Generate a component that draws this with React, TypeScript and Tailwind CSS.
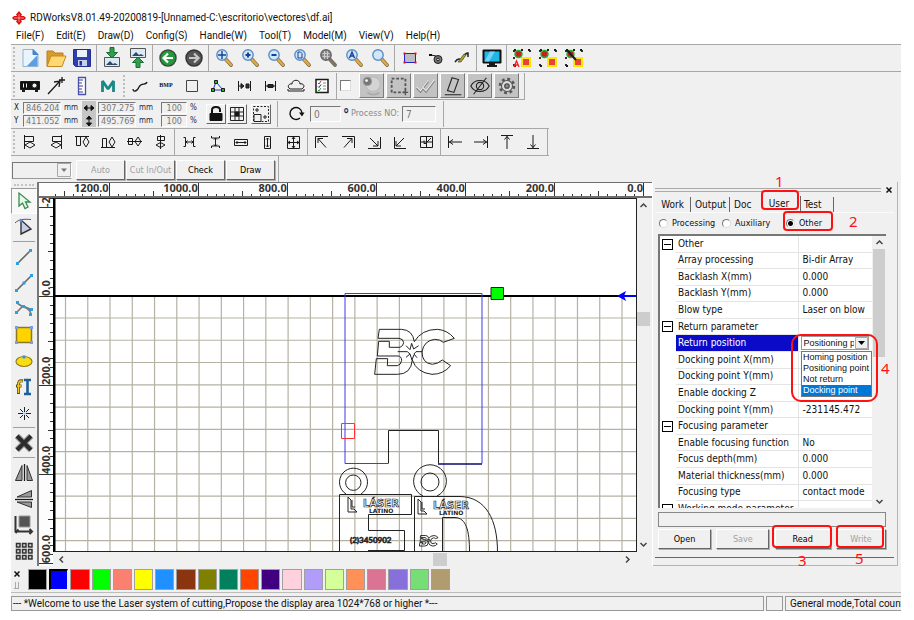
import React from "react";

const UI = "font-['Roboto','Noto_Sans',sans-serif]";
const PANEL = "font-['DejaVu_Sans_Condensed','DejaVu_Sans',sans-serif]";

type Kids = { children?: React.ReactNode };

function Tool({ label, children }: Kids & { label: string }) {
  return (
    <button type="button" aria-label={label} className="flex h-[26px] w-[26px] shrink-0 items-center justify-center">
      <svg width="24" height="24" viewBox="0 0 24 24" fill="none" stroke="#1a1a1a" strokeWidth="1">
        {children}
      </svg>
    </button>
  );
}

function RaisedTool({ label, children }: Kids & { label: string }) {
  return (
    <button
      type="button"
      aria-label={label}
      className="flex h-[25px] w-[25px] shrink-0 items-center justify-center border border-t-white border-l-white border-r-[#7a7a7a] border-b-[#7a7a7a] bg-[#c3c3c3]"
    >
      <svg width="22" height="22" viewBox="0 0 24 24" fill="none" stroke="#222" strokeWidth="1.2">
        {children}
      </svg>
    </button>
  );
}

function Grip() {
  return <div className="mx-[2px] h-[22px] w-[2px] shrink-0 border-l-2 border-dotted border-[#bdbdbd]" />;
}

function Sep4() {
  return <div className="mr-[2px] ml-px h-[26px] w-px shrink-0 bg-[#a8a8a8]" />;
}

function Sep3() {
  return <div className="mx-px h-[26px] w-px shrink-0 bg-[#a8a8a8]" />;
}

function HSep() {
  return <div className="mt-px mb-[2px] ml-[2px] h-px w-[22px] shrink-0 bg-[#a0a0a0]" />;
}

function Lens({ fill = "#cfe6fb", ring = "#5b8fc4", handle = "#e8a838", children }: Kids & { fill?: string; ring?: string; handle?: string }) {
  return (
    <>
      <path d="M14 13.5 19 19" stroke="#7a6a4a" strokeWidth="3.8" strokeLinecap="round" />
      <path d="M14.2 13.8 19 18.8" stroke={handle} strokeWidth="2.4" strokeLinecap="round" />
      <circle cx="10" cy="9" r="5.2" fill={fill} stroke={ring} strokeWidth="1.4" />
      <g stroke="#1c3f94" strokeWidth="1.4">{children}</g>
    </>
  );
}

function ToolbarMain() {
  return (
    <div role="toolbar" aria-label="Standard" className="flex h-7 items-center border-t border-b border-[#a8a8a8]">
      <Grip />
      <Tool label="New">
        <path d="M5 3.5h10l5 5v12H5z" fill="#eaf4fd" stroke="#8fb4d8" />
        <path d="M9 20 19.5 9v11z" fill="#5b9fe0" stroke="none" />
        <path d="M15 3.5v5h5z" fill="#3f86cf" stroke="#3f86cf" />
      </Tool>
      <Tool label="Open">
        <path d="M3 20V5h6l2 2h8v4" fill="#d99a2b" stroke="#b97f1d" />
        <path d="M3 20.5 7 10h15l-4 10.5z" fill="#ffd873" stroke="#c08a22" />
      </Tool>
      <Tool label="Save">
        <path d="M3.5 3.5h17v17h-15l-2-2z" fill="#2e3fae" stroke="#23308c" />
        <path d="M7 4h10v7H7z" fill="#eef1fa" stroke="none" />
        <path d="M8 14h9v6H8z" fill="#c9cfe6" stroke="none" />
        <path d="M9.5 15h2.5v4.5H9.5z" fill="#26318a" stroke="none" />
      </Tool>
      <Sep4 />
      <Tool label="Import">
        <path d="M4.5 11.5h15v9h-15z" fill="#dceaf5" stroke="#555" />
        <path d="m6 19 4-4 3 3 2-1 3 2z" fill="#2a4a6a" stroke="none" />
        <path d="M10 1.500h4v5h3.500L12 12 6.500 6.500H10z" fill="#2fa04b" stroke="#1b6e30" />
      </Tool>
      <Tool label="Export">
        <path d="M4.5 2.5h15v9h-15z" fill="#dceaf5" stroke="#555" />
        <path d="m6 10 4-4 3 3 2-1 3 2z" fill="#2a4a6a" stroke="none" />
        <path d="M10 21.500h4v-5h3.500L12 11l-5.500 5.500H10z" fill="#2fa04b" stroke="#1b6e30" />
      </Tool>
      <Sep4 />
      <Tool label="Undo">
        <circle cx="12" cy="12" r="8" fill="#22993a" stroke="#3c4a3c" strokeWidth="1.5" />
        <path d="M17 12H8m4-4.5L7.5 12l4.5 4.5" stroke="#fff" strokeWidth="2.2" />
      </Tool>
      <Tool label="Redo">
        <circle cx="12" cy="12" r="8" fill="#555" stroke="#333" strokeWidth="1.5" />
        <path d="M7 12h9m-4-4.5 4.5 4.5-4.5 4.5" stroke="#c8c8c8" strokeWidth="2.2" />
      </Tool>
      <Sep4 />
      <Tool label="Pan">
        <Lens>
          <path d="M10 5v8M6 9h8" />
        </Lens>
      </Tool>
      <Tool label="Zoom in">
        <Lens>
          <path d="M10 6.5v5M7.500 9h5" strokeWidth="2" />
        </Lens>
      </Tool>
      <Tool label="Zoom out">
        <Lens>
          <path d="M7.500 9h5" strokeWidth="2" />
        </Lens>
      </Tool>
      <Tool label="Zoom to page">
        <Lens>
          <path d="M8 6h2.500L12 7.500V12H8z" strokeWidth="1" />
        </Lens>
      </Tool>
      <Tool label="Zoom to table">
        <Lens fill="#8a8a8a" ring="#666" handle="#777">
          <path d="M6.500 7.500h7M6.500 10.500h7M8.500 5v8M11.500 5v8" stroke="#ccc" strokeWidth="1" />
        </Lens>
      </Tool>
      <Tool label="Zoom all">
        <Lens>
          <path d="m7.500 12 2.500-6 2.500 6M8.500 10h3" />
        </Lens>
      </Tool>
      <Tool label="Zoom selection">
        <Lens />
      </Tool>
      <Sep4 />
      <Tool label="Node box">
        <path d="M6.500 7.500h11v9h-11z" fill="#bdbdbd" stroke="#2222dd" />
        <path d="M5.500 6.500h2v2h-2zM16.500 6.500h2v2h-2zM5.500 15.500h2v2h-2zM16.500 15.500h2v2h-2z" fill="#e11" stroke="none" />
      </Tool>
      <Tool label="Origin">
        <circle cx="14" cy="13.500" r="4" fill="#777" />
        <circle cx="14" cy="13.500" r="1.3" fill="#eee" />
        <path d="m7 9 5 1" />
        <path d="M5 8h3v2H5z" fill="#111" stroke="none" />
      </Tool>
      <Tool label="Path order">
        <path d="M5 16c4-6 5-1 7-3s2-6 6-6v4" stroke="#222" strokeWidth="1.500" />
        <path d="m8 16 6-8 2 1-5 7z" fill="#b6a81e" stroke="#443" strokeWidth=".7" />
      </Tool>
      <Sep4 />
      <Tool label="Preview">
        <path d="M3 4h18v13H3z" fill="#111" stroke="#111" />
        <path d="M4.5 5.5h15v10h-15z" fill="#1fb6e8" stroke="none" />
        <path d="M10 5.5h5l-6 10H4.500z" fill="#6fd4f5" stroke="none" />
        <path d="M10 17h4v3H10zM7 20h10" fill="#111" strokeWidth="2" />
      </Tool>
      <Sep4 />
      {["Select all", "Select group", "Select path"].map((name, i) => (
        <Tool key={name} label={name}>
          <path d="M4 4h16M4 20h16M4 4v16M20 4v16" strokeDasharray="2 5" strokeWidth="1.8" />
          <path d="M12 12h8v8h-8z" fill="#e8423a" stroke="#ffe800" strokeWidth="2" />
          <circle cx="8.500" cy="8" r="3.500" fill="#c42020" stroke="#25b030" strokeWidth="1.500" />
          {i === 0 && <path d="m4 21 2.500-6L9 21M5 19h3" stroke="#e22" strokeWidth="1.300" />}
          {i === 2 && <path d="m5 4 9 10" strokeWidth="2" />}
        </Tool>
      ))}
    </div>
  );
}

function ToolbarSecond() {
  return (
    <div role="toolbar" aria-label="System" className="flex h-7 items-center self-start border-b border-[#a8a8a8]">
      <Grip />
      <Tool label="Device">
        <path d="M2.500 7.500h19v8h-19z" fill="#111" />
        <circle cx="16.500" cy="11.500" r="2.500" fill="#eee" />
        <path d="M5.500 9.500v4M8.500 9.500v4" stroke="#eee" />
        <path d="M4 17h3M17 17h3" strokeWidth="2" />
      </Tool>
      <Tool label="Set origin">
        <path d="M4 20 16 7M10 8l6-1-1 6M18 3v6M15 6h6" strokeWidth="1.300" />
      </Tool>
      <Tool label="Measure">
        <path d="M8.500 3.500h7v17h-7z" fill="#fff" stroke="#4a50a8" strokeWidth="1.300" />
        <path d="M9 6h4M9 9h3M9 12h4M9 15h3M9 18h4" stroke="#333a99" />
      </Tool>
      <Tool label="Material library">
        <path d="M6.500 18V7l5.500 8 5.500-8v11" stroke="#178a86" strokeWidth="2.800" strokeLinejoin="bevel" />
      </Tool>
      <Grip />
      <Tool label="Curve">
        <path d="M5 15c0 3 4 3 6-2s7-1 8-5" strokeWidth="1.300" />
      </Tool>
      <button type="button" className="h-[26px] w-[26px] shrink-0 text-center font-['Liberation_Serif',serif] text-[6px] font-bold">
        BMP
      </button>
      <Tool label="Frame">
        <path d="M6.500 6.500h11v11h-11z" stroke="#444" />
      </Tool>
      <Tool label="Nodes">
        <path d="m10 8 7 8M7 16h9M10 8l-3 8" stroke="#2233cc" />
        <path d="M8.500 6.500h3v3h-3zM5.500 14.500h3v3h-3zM15.500 14.500h3v3h-3z" fill="#19c019" />
      </Tool>
      <Tool label="Offset in">
        <path d="M6.500 7v10M18.500 7v10M7 12h4" />
        <path d="m9 9.500 3 2.500-3 2.500zM14 10h3v4h-3z" fill="#333" />
      </Tool>
      <Tool label="Offset edge">
        <path d="M7.500 7v10M17.500 7v10M10 10.500h5v3h-5zM8 12h9" />
        <path d="M10 11h5v2h-5z" fill="#333" />
      </Tool>
      <Tool label="Dock">
        <path d="M6 15c-4-3 0-6 2-5 0-5 8-5 8 0 3-1 6 2 2 5zM4 15v2h16v-2" />
      </Tool>
      <Tool label="Task list">
        <path d="M6 5.500h12v13H6z" fill="#fff" strokeWidth="1.500" />
        <path d="m8 9 1 1 2-3" stroke="#d22" />
        <path d="m8 12.500 1 1 2-3" stroke="#22c" />
        <path d="m8 16 1 1 2-3" stroke="#2a2" />
        <path d="M13 9h3M13 12h3M13 15h3" stroke="#888" />
      </Tool>
      <Sep3 />
      <input type="checkbox" aria-label="Enable selection" className="mr-[8px] ml-[2px] h-[11px] w-[11px] shrink-0 appearance-none border border-t-[#777] border-l-[#777] border-r-[#ddd] border-b-[#ddd] bg-white" />
      <div className="flex gap-[2px]">
        <RaisedTool label="Sphere">
          <circle cx="13" cy="10" r="8" fill="#d4d4d4" stroke="#bbb" />
          <circle cx="7" cy="7" r="4.500" fill="#777" stroke="#999" />
          <circle cx="6" cy="6" r="1.500" fill="#fff" stroke="none" />
          <path d="M7 19c4 3 9 3 13 0" stroke="#aaa" strokeWidth="2" />
        </RaisedTool>
        <RaisedTool label="Marquee">
          <path d="M4 4h15v15H4z" stroke="#555" strokeWidth="2" strokeDasharray="3 2" />
          <path d="M19 16v6M16 19h6" stroke="#555" strokeWidth="1.500" />
        </RaisedTool>
        <RaisedTool label="Apply">
          <path d="m2 14 4 4L14 7M9 15l3 3L21 6" stroke="#888" strokeWidth="2.600" />
          <path d="m2 13 4 4L14 6M9 14l3 3L21 5" stroke="#eee" strokeWidth="1.200" />
        </RaisedTool>
        <RaisedTool label="Skew">
          <path d="m11 3 7 2-5 14-7-2zM3 21.500h18" />
        </RaisedTool>
        <RaisedTool label="Visibility">
          <path d="M2 12c4-8 16-8 20 0-4 8-16 8-20 0zM5 21 19 3" />
          <circle cx="12" cy="12" r="4" />
        </RaisedTool>
        <RaisedTool label="Settings">
          <circle cx="12" cy="12" r="7.500" stroke="#555" strokeWidth="3" strokeDasharray="3 2.900" />
          <circle cx="12" cy="12" r="6" fill="#ddd" stroke="#555" />
          <circle cx="12" cy="12" r="2.500" fill="#888" stroke="#444" />
        </RaisedTool>
      </div>
      <div className="ml-[5px] h-[26px] w-px bg-[#a8a8a8]" />
    </div>
  );
}

const field =
  "border border-t-[#777] border-l-[#777] border-r-white border-b-white bg-[#f0f0f0] p-0 leading-[10px] text-[#777]";

function SizeField({ label, value, width, unit }: { label: string; value: string; width: string; unit: string }) {
  return (
    <div className="flex h-[13px] items-center">
      <input aria-label={label} defaultValue={value} className={`${field} h-[12px] pl-[2px] text-[9px] ${width} ${PANEL}`} />
      <span className="ml-[3px] w-[18px] text-[8px] text-[#1d2b4a]">{unit}</span>
    </div>
  );
}

function ToolbarCoords() {
  const small =
    "flex h-[20px] w-[20px] shrink-0 items-center justify-center border border-t-white border-l-white border-r-[#666] border-b-[#666] bg-[#f0f0f0]";
  return (
    <div role="toolbar" aria-label="Position and size" className={`flex h-7 items-center self-start ${PANEL}`}>
      <div className="flex w-[12px] flex-col pl-[3px] text-[8px]">
        <span className="h-[13px] leading-[13px]">X</span>
        <span className="h-[13px] leading-[13px]">Y</span>
      </div>
      <div className="flex w-[59px] flex-col">
        <SizeField label="X" value="846.204" width="w-[38px]" unit="mm" />
        <SizeField label="Y" value="411.052" width="w-[38px]" unit="mm" />
      </div>
      <button type="button" aria-label="Resize mode" className="h-[26px] w-[14px] bg-[#c6c6c6]">
        <svg width="14" height="26" viewBox="0 0 14 26" fill="#111" stroke="#111">
          <path d="M3 7h8M5 4.500 2 7l3 2.500zM9 4.500 12 7 9 9.500zM7 17v6M4.500 18 7 15l2.500 3zM4.500 22 7 25l2.500-3z" />
        </svg>
      </button>
      <div className="ml-[2px] flex w-[63px] flex-col">
        <SizeField label="Width" value="307.275" width="w-[38px]" unit="mm" />
        <SizeField label="Height" value="495.769" width="w-[38px]" unit="mm" />
      </div>
      <div className="flex w-[45px] flex-col">
        <SizeField label="Width percent" value=" 100" width="w-[26px]" unit="%" />
        <SizeField label="Height percent" value=" 100" width="w-[26px]" unit="%" />
      </div>
      <button type="button" aria-label="Lock ratio" className={small}>
        <svg width="16" height="18" viewBox="0 0 16 18" fill="none" stroke="#111">
          <path d="M4 8V5c0-4 8-4 8 0v2" strokeWidth="2" />
          <path d="M2 8.500h12v7H2z" fill="#111" />
        </svg>
      </button>
      <button type="button" aria-label="Anchor point" className={`${small} ml-px`}>
        <svg width="16" height="16" viewBox="0 0 16 16" fill="none" stroke="#222">
          <path d="M1.500 1.500h13v13h-13zM6 1.500v13M10 1.500v13M1.500 6h13M1.500 10h13" />
          <path d="M6 6h4v4H6z" fill="#111" />
        </svg>
      </button>
      <button type="button" aria-label="Copy offset" className={`${small} ml-[4px]`}>
        <svg width="18" height="18" viewBox="0 0 18 18" fill="none" stroke="#222">
          <path d="M1.500 1.500h15v15h-15z" strokeDasharray="2 1.500" />
          <path d="M2 9.500h7v7H2zM5 3v4M3 5h4M13 10v4M11 12h4" />
        </svg>
      </button>
      <div className="ml-[6px] h-[26px] w-px bg-[#a8a8a8]" />
      <button type="button" aria-label="Rotate" className="ml-[8px] flex w-[20px] justify-center">
        <svg width="18" height="18" viewBox="0 0 18 18" fill="none" stroke="#111" strokeWidth="1.400">
          <path d="M13 13a6 6 0 1 1 2-5" />
          <path d="m12 7.500 5.500 0-2.500 4z" fill="#111" stroke="none" />
        </svg>
      </button>
      <input aria-label="Angle" defaultValue="0" className={`${field} ml-[4px] h-[16px] w-[31px] pl-[3px] text-[10px] ${PANEL}`} />
      <span className="ml-[2px] w-[8px] text-[14px] font-bold text-[#1d2b5a]">°</span>
      <label htmlFor="process-no" className="w-[51px] text-[9px] whitespace-nowrap text-[#8a8a8a]">
        Process NO:
      </label>
      <input id="process-no" defaultValue="7" className={`${field} h-[16px] w-[34px] pl-[3px] text-[10px] ${PANEL}`} />
      <div className="ml-[7px] h-[26px] w-px bg-[#a8a8a8]" />
    </div>
  );
}

const alignGroups: { name: string; d: string }[][] = [
  [
    { name: "Align left", d: "M6.500 5v14M6.500 6.500h9v5h-9M7 15l5-3 5 3-5 3z" },
    { name: "Align right", d: "M17.500 5v14M17.500 6.500h-9v5h9M17 15l-5-3-5 3 5 3z" },
    { name: "Align top", d: "M5 6.500h14M6.500 6.500v9h4v-9M16 7l-3 5 3 5 3-5z" },
    { name: "Align bottom", d: "M5 17.500h14M6.500 17.500v-9h4v9M16 17l-3-5 3-5 3 5z" },
    { name: "Align middle", d: "M5 11.500h15M6.500 8.500h4v6h-4zM16 7l-3 4.500 3 4.500 3-4.500z" },
    { name: "Align center", d: "M12.500 5v14M9.500 6.500h7v4h-7zM8 15l4.500-2.500L17 15l-4.500 2.500z" },
  ],
  [
    { name: "Space across", d: "M6.500 7.500h2v9h-2M18.500 7.500h-2v9h2M9 12h7M10.500 10.500 9 12l1.500 1.500M14.500 10.500 16 12l-1.500 1.500" },
    { name: "Space down", d: "M8.500 6v2h8V6M8.500 18v-2h8v2M12.500 8v8M11 9.500 12.500 8 14 9.500M11 14.500l1.500 1.500 1.500-1.500" },
    { name: "Same width", d: "M5.500 9.500h13v6h-13zM7 12.500h10M8.500 11 7 12.500 8.500 14M15.500 11l1.500 1.500-1.500 1.500" },
    { name: "Same height", d: "M9.500 6.500h6v12h-6zM12.500 8v9M11 9.500 12.500 8 14 9.500M11 15.500l1.500 1.500 1.500-1.500" },
    { name: "Same size", d: "M6.500 6.500h12v12h-12zM12.500 6v13M6 12.500h13M9 11l-2 1.500L9 14M16 11l2 1.500-2 1.500M11 9l1.500-2L14 9M11 16l1.500 2 1.500-2" },
  ],
  [
    { name: "Top left", d: "M5.500 18V6.500H18M8 8.500l8 9M8 13V8.500h5" },
    { name: "Top right", d: "M18.500 18V6.500H6M16 8.500l-8 9M16 13V8.500h-5" },
    { name: "Bottom right", d: "M18.500 7v11.500H6M8 8l8 8M16 11v5h-5" },
    { name: "Bottom left", d: "M6.500 7v11.500H18M16 8l-8 8M8 11v5h5" },
    { name: "Page center", d: "M6.500 6.500h12v11h-12zM12.500 6.500v11M6.500 12h12M17 8l-4 4M10 10.500v3h3" },
  ],
  [
    { name: "To left", d: "M5.500 6v12M6 12h13M10 9.500 6.500 12l3.500 2.500" },
    { name: "To right", d: "M18.500 6v12M18 12H5M14 9.500l3.500 2.500-3.500 2.500" },
    { name: "To top", d: "M6 5.500h12M12 6v13M9.500 9.500 12 6.500l2.500 3" },
    { name: "To bottom", d: "M6 18.500h12M12 18V5M9.500 14.500l2.500 3 2.500-3" },
  ],
];

function ToolbarAlign() {
  return (
    <div role="toolbar" aria-label="Align" className="flex h-7 items-center self-start border-t border-b border-[#a8a8a8]">
      <Grip />
      {alignGroups.map((group, i) => (
        <React.Fragment key={i}>
          {group.map((icon) => (
            <Tool key={icon.name} label={icon.name}>
              <path d={icon.d} />
            </Tool>
          ))}
          <Sep3 />
        </React.Fragment>
      ))}
    </div>
  );
}

function Push({ children, muted, width }: Kids & { muted?: boolean; width: string }) {
  return (
    <button
      type="button"
      className={`h-[20px] ${width} shrink-0 border border-t-white border-l-white border-r-[#666] border-b-[#666] bg-[#f0f0f0] text-center text-[9px] leading-[18px] whitespace-nowrap shadow-[1px_1px_0_#b0b0b0] ${muted ? "text-[#a0a0a0]" : "text-black"} ${PANEL}`}
    >
      {children}
    </button>
  );
}

function ToolbarCut() {
  return (
    <div className="flex h-[26px] items-center self-start border-r border-[#a8a8a8] pt-[2px] pl-px">
      <div className="relative h-[17px] w-[60px]">
        <select aria-label="Cut node" className="h-full w-full appearance-none border border-t-[#777] border-l-[#777] border-r-white border-b-[#999] bg-[#f0f0f0]">
          <option> </option>
        </select>
        <svg className="pointer-events-none absolute top-px right-px" width="14" height="14" viewBox="0 0 14 14">
          <path d="M.5.5h13v13H.5z" fill="#f0f0f0" stroke="#a8a8a8" />
          <path d="M4 5.500h6L7 9z" fill="#777" />
        </svg>
      </div>
      <div className="ml-[4px] flex gap-px pr-[3px]">
        <Push width="w-[49px]" muted>Auto</Push>
        <Push width="w-[49px]" muted>Cut In/Out</Push>
        <Push width="w-[49px]">Check</Push>
        <Push width="w-[49px]">Draw</Push>
      </div>
    </div>
  );
}

function ToolBox() {
  return (
    <div role="toolbar" aria-label="Drawing tools" className="flex w-[26px] shrink-0 flex-col">
      <div className="mx-[3px] mt-[2px] mb-[2px] h-[2px] border-t-2 border-dotted border-[#c4c4c4]" />
      <div className="border border-t-[#999] border-l-[#999] border-r-white border-b-white bg-[#f8f8f8]">
        <div className="-m-px">
          <Tool label="Pick">
            <path d="M7 4v13l3.500-3 2.500 5.500 3-1.500-2.500-5H18z" fill="#e4fce8" stroke="#3d8a4d" strokeWidth="1.300" />
          </Tool>
        </div>
      </div>
      <Tool label="Edit nodes">
        <path d="M9 5v14l10-5z" fill="#c8cce6" stroke="#333" strokeWidth="1.400" />
        <path d="M3 8c4-4 9-4 16-3.500" stroke="#555" />
        <circle cx="9" cy="5.500" r="1.500" fill="#5b8ff5" stroke="none" />
      </Tool>
      <HSep />
      <Tool label="Line">
        <path d="M6 18 18 6" stroke="#666" strokeWidth="1.600" />
        <path d="M4 17h3v3H4zM17 4h3v3h-3z" fill="#2f9fe0" stroke="none" />
      </Tool>
      <Tool label="Polyline">
        <path d="M5 19 19 5" stroke="#666" strokeWidth="1.600" />
        <path d="M3 18h3v3H3zM18 3h3v3h-3zM10.500 10.500h3v3h-3z" fill="#2f9fe0" stroke="none" />
      </Tool>
      <Tool label="Spline">
        <path d="m5 6 6 4c5 1 7 3 8 7M4 16l7-7 9 4" stroke="#777" strokeWidth="1.600" />
        <path d="M4 4h3v3H4zM3 14h3v3H3zM10 8h3v3h-3zM18 11h3v3h-3zM17 16h3v3h-3z" fill="#2f9fe0" stroke="none" />
      </Tool>
      <Tool label="Rectangle">
        <path d="M4.500 4.500h15v15h-15z" fill="#ffd400" stroke="#8a7a28" strokeWidth="1.500" />
        <path d="M3 3h3v3H3zM18 3h3v3h-3zM3 18h3v3H3zM18 18h3v3h-3z" fill="#7a9af0" stroke="none" />
      </Tool>
      <Tool label="Ellipse">
        <ellipse cx="12" cy="12.500" rx="8" ry="5" fill="#f7dc10" stroke="#95801c" strokeWidth="1.200" />
        <path d="M10.500 6.500h3v3h-3z" fill="#3b8fe8" stroke="none" />
      </Tool>
      <Tool label="Text">
        <path d="M11 6c-4-1-4.500 1-4.500 4v9M4 11h5.500" stroke="#5d4d10" strokeWidth="3" />
        <path d="M10.500 6.200c-3.500-1-4 1-4 3.800v8M5 11h4" stroke="#f2c71d" strokeWidth="1.500" />
        <path d="M12 5h7M12 19h7M15.500 5v14" stroke="#1b5f96" strokeWidth="2.600" />
      </Tool>
      <Tool label="Point">
        <path d="M12.500 6v5M12.500 14v5M6 12.500h5M14 12.500h5M8 8l3 3M17 8l-3 3M8 17l3-3M17 17l-3-3" stroke="#222" />
        <path d="M11.500 11.500h2v2h-2z" fill="#8fc0ff" stroke="none" />
      </Tool>
      <HSep />
      <Tool label="Delete">
        <path d="m5 5 14 14M19 5 5 19" stroke="#aaa" strokeWidth="6.500" />
        <path d="m5 5 14 14M19 5 5 19" stroke="#2c2c2c" strokeWidth="4.200" />
      </Tool>
      <HSep />
      <Tool label="Mirror horizontal">
        <path d="M10 4.500V19.500H3.500zM15 4.500V19.500h5.500z" fill="#999" stroke="#333" />
        <path d="M12.500 3v17" strokeWidth="1.300" />
      </Tool>
      <Tool label="Mirror vertical">
        <path d="M19.500 3.500v6.500H5zM19.500 20.500V15H5z" fill="#999" stroke="#333" />
        <path d="M3 12.500h18" strokeWidth="1.300" />
      </Tool>
      <Tool label="Dock origin">
        <path d="M7 3h11v11H7z" fill="#555" stroke="#999" />
        <path d="M3.500 3v15.500H20M3.500 20l3-3.500M17.500 16l2.500 2.500-2.500 2.500" stroke="#333" strokeWidth="2" />
      </Tool>
      <Tool label="Array">
        <path d="M4.500 4.500h3.500v3.500h-3.500zM10.500 4.500h3.500v3.500h-3.500zM16.500 4.500h3.500v3.500h-3.500zM4.500 10.500h3.500v3.500h-3.500zM10.500 10.500h3.500v3.500h-3.500zM16.500 10.500h3.500v3.500h-3.500zM4.500 16.500h3.500v3.500h-3.500zM10.500 16.500h3.500v3.500h-3.500zM16.500 16.500h3.500v3.500h-3.500z" fill="#d8d8d8" stroke="#333" strokeWidth="1.500" />
      </Tool>
    </div>
  );
}

const UNIT = 8.906;
const ORIGIN_X = 643;
const ORIGIN_Y = 296;
const rulerFont = "font-['Noto_Sans','Open_Sans',sans-serif] text-[11px] font-bold";

function TopRuler() {
  const ticks = Array.from({ length: 67 }, (_, i) => i);
  return (
    <svg className="block h-[16px] w-full overflow-visible border-t border-b-2 border-[#6e6e6e] bg-[#fdfdfd]">
      <g transform="translate(-53 0)">
        {ticks.map((i) => {
          const x = Math.round(ORIGIN_X - i * UNIT) + 0.5;
          const top = i % 10 === 0 ? 0 : i % 5 === 0 ? 8 : 11;
          return <path key={i} d={`M${x} ${top}V13`} stroke="#333" />;
        })}
        {[0, 200, 400, 600, 800, 1000, 1200].map((v) => (
          <text key={v} x={ORIGIN_X - (v / 20) * UNIT} y="9" textAnchor="end" fill="#333" className={rulerFont}>
            {v.toFixed(1)}
          </text>
        ))}
      </g>
    </svg>
  );
}

function SideRuler() {
  const ticks = Array.from({ length: 43 }, (_, i) => i - 11);
  return (
    <svg className="block h-[368px] w-[15px] bg-[#fdfdfd]">
      <g transform="translate(0 -198)">
        {ticks.map((i) => {
          const y = Math.round(ORIGIN_Y + i * UNIT) + 0.5;
          const left = i % 10 === 0 ? 0 : i % 5 === 0 ? 9 : 11;
          return <path key={i} d={`M${left} ${y}H14`} stroke="#333" />;
        })}
        {[-200, 0, 200, 400, 600].map((v) => (
          <text key={v} transform={`translate(11 ${ORIGIN_Y + (v / 20) * UNIT}) rotate(-90)`} fill="#333" className={rulerFont}>
            {v.toFixed(1)}
          </text>
        ))}
      </g>
    </svg>
  );
}

function Monogram() {
  return (
    <>
      <path d="M238 148H305Q338 150 343 185Q365 148 412 148Q442 150 463 175L430 187Q420 178 404 178Q372 182 366 215Q366 250 397 253Q413 252 427 240L452 257Q430 283 396 283Q350 278 337 240Q333 283 292 283H224L229 236H263L262 257H292Q303 255 305 241Q304 228 294 228H232L236 184H268V202H300Q310 198 311 188Q310 176 297 175H234Z" />
      <path d="M293 215H322L330 222L318 232M318 197L330 209L335 190L341 207L356 197M368 215H348L342 222L351 233M330 222L336 240L342 224" />
    </>
  );
}

function Brand({ x, y }: { x: number; y: number }) {
  return (
    <g transform={`translate(${x} ${y})`}>
      <path d="M0 0V15H9L6 12H3V3ZM4 3V10H7" strokeWidth="1" />
      <text x="15" y="10" strokeWidth="0.7" className="font-['DejaVu_Sans',sans-serif] text-[10px] font-bold">
        LÁSER
      </text>
      <text x="21" y="16" fill="#222" stroke="none" className="font-['DejaVu_Sans',sans-serif] text-[6px] font-bold">
        LATINO
      </text>
    </g>
  );
}

function Canvas() {
  const columns = Array.from({ length: 32 }, (_, i) => 65.5 + i * 22.26);
  const rows = Array.from({ length: 11 }, (_, i) => 318 + i * 22.26);
  return (
    <svg role="img" aria-label="Work area" className="block h-[354px] w-full bg-white">
      <g transform="translate(-53 -198)" fill="none" stroke="#222">
        <g stroke="#b5b2a3" strokeWidth="1.200">
          {columns.map((x) => (
            <path key={x} d={`M${x} 297V552`} />
          ))}
          {rows.map((y) => (
            <path key={y} d={`M54 ${y}H700`} />
          ))}
        </g>
        <path d="M54 296H700" stroke="#000" strokeWidth="2" />
        <path d="M388.500 463.500V430.500H438.500V463.500" />
        <path d="M482 463.500V293.500H345V463.500H388" stroke="#3b3be8" />
        <path d="M438 464H482" stroke="#0a0a70" strokeWidth="1.500" />
        <path d="M341.500 423.500h13v15h-13z" stroke="#f33" />
        <path d="M491 287.500h12.500V299.500H491z" fill="#0f0" />
        <path d="M636 296H622" stroke="#00f" strokeWidth="2" />
        <path d="m617 296 9-5-2 5 2 5z" fill="#00f" stroke="none" />
        <g transform="translate(300 280) scale(.3333)" strokeWidth="3">
          <Monogram />
        </g>
        <path d="M346 494A14 14 0 1 1 361 494" />
        <circle cx="353.300" cy="482.700" r="7.700" />
        <path d="M423 496A16.400 16.400 0 1 1 437 496" />
        <circle cx="430" cy="482" r="9" />
        <path d="M339.500 552V494.500H411.500V514.500H368.500V530.500H404.500V550.500H368" />
        <path d="M414.500 552V496.500H460C486 497 497.500 520 497.500 552" />
        <path d="M442.500 552V517.500H455C466 518 469.500 530 469.500 552" />
        <Brand x={348} y={497} />
        <Brand x={418} y={499} />
        <text x="350" y="543" fill="#111" strokeWidth=".5" className="font-['Lato',sans-serif] text-[8px] font-bold">
          (2)3450902
        </text>
        <g transform="translate(402 524) scale(.078)" strokeWidth="12">
          <Monogram />
        </g>
        <path d="M54 198V552" stroke="#000" strokeWidth="3" />
        <path d="M54 198.500H700M54 551.500H700" stroke="#222" />
      </g>
    </svg>
  );
}

function Chevron({ d }: { d: string }) {
  return (
    <svg width="13" height="13" viewBox="0 0 13 13" fill="none" stroke="#444" strokeWidth="1.500" className="shrink-0">
      <path d={d} />
    </svg>
  );
}

const UP = "m3.500 8 3-3 3 3";
const DOWN = "m3.500 5 3 3 3-3";
const LEFT = "m8 3.500-3 3 3 3";
const RIGHT = "m5 3.500 3 3-3 3";

function Workspace() {
  return (
    <div className="flex min-w-0 flex-1 flex-col border-l-2 border-[#777]">
      <div className="flex">
        <div className="h-[16px] w-[14px] shrink-0 border-t border-b-2 border-[#6e6e6e] bg-[#fdfdfd]" />
        <div className="min-w-0 flex-1">
          <TopRuler />
        </div>
      </div>
      <div className="flex">
        <div className="w-[14px] shrink-0 overflow-hidden">
          <SideRuler />
        </div>
        <div className="min-w-0 flex-1">
          <Canvas />
          <div className="flex h-[14px] items-center justify-between px-[2px]">
            <Chevron d={LEFT} />
            <div className="flex min-w-0 flex-1 justify-end pr-[174px]">
              <div className="h-[13px] w-[14px] bg-[#cdcdcd]" />
            </div>
            <Chevron d={RIGHT} />
          </div>
        </div>
        <div className="flex h-[354px] w-[16px] shrink-0 flex-col items-start justify-between border-l border-[#222] py-px">
          <Chevron d={UP} />
          <div className="flex flex-1 flex-col justify-start pt-[100px]">
            <div className="h-[14px] w-[13px] bg-[#cdcdcd]" />
          </div>
          <Chevron d={DOWN} />
        </div>
      </div>
    </div>
  );
}

type Row = { name: string; value?: string; group?: boolean; picker?: boolean };

const rows: Row[] = [
  { name: "Other", group: true },
  { name: "Array processing", value: "Bi-dir Array" },
  { name: "Backlash X(mm)", value: "0.000" },
  { name: "Backlash Y(mm)", value: "0.000" },
  { name: "Blow type", value: "Laser on blow" },
  { name: "Return parameter", group: true },
  { name: "Return position", picker: true },
  { name: "Docking point X(mm)", value: "" },
  { name: "Docking point Y(mm)", value: "" },
  { name: "Enable docking Z", value: "" },
  { name: "Docking point Y(mm)", value: "-231145.472" },
  { name: "Focusing parameter", group: true },
  { name: "Enable focusing function", value: "No" },
  { name: "Focus depth(mm)", value: "0.000" },
  { name: "Material thickness(mm)", value: "0.000" },
  { name: "Focusing type", value: "contact mode" },
  { name: "Working mode parameter", group: true },
];

const choices = ["Homing position", "Positioning point", "Not return", "Docking point"];

function PropertyTable() {
  return (
    <div className="flex h-[274px] overflow-hidden border-t-2 border-l-2 border-[#777] bg-white">
      <div className="h-[282px] flex-1">
        <table className="h-full w-full table-fixed border-collapse text-[10px] leading-[14px] whitespace-nowrap">
          <colgroup>
            <col className="w-[16px]" />
            <col className="w-[122px]" />
            <col />
          </colgroup>
          <tbody>
            {rows.map((row, i) => (
              <tr key={i}>
                <td className="p-0 pl-[2px] align-middle">
                  {row.group && (
                    <button type="button" aria-label={`Collapse ${row.name}`} className="flex h-[11px] w-[11px] items-center justify-center border border-black">
                      <span className="h-px w-[7px] bg-black" />
                    </button>
                  )}
                </td>
                <th
                  scope="row"
                  className={`border-r border-b border-[#e4e4e4] p-0 pl-[2px] text-left font-normal ${row.picker ? "bg-[#0a0ac8] text-white" : ""}`}
                >
                  {row.name}
                </th>
                <td className="border-b border-[#e4e4e4] p-0 pl-[4px]">
                  {row.picker ? (
                    <div className="relative -ml-[2px] h-[14px] w-[68px]">
                      <select
                        aria-label="Return position"
                        defaultValue="Positioning point"
                        className="h-full w-full appearance-none border border-[#999] bg-white pr-[14px] pl-[2px] font-['Liberation_Sans',sans-serif] text-[9px] leading-[12px]"
                      >
                        {choices.map((c) => (
                          <option key={c}>{c}</option>
                        ))}
                      </select>
                      <svg className="pointer-events-none absolute top-px right-px" width="13" height="12" viewBox="0 0 13 12">
                        <path d="M.5.5h12v11H.5z" fill="#f0f0f0" stroke="#aaa" />
                        <path d="M3 4h7l-3.500 4z" fill="#000" />
                      </svg>
                    </div>
                  ) : (
                    row.value
                  )}
                </td>
              </tr>
            ))}
          </tbody>
        </table>
      </div>
      <div className="flex w-[14px] shrink-0 flex-col items-center justify-between bg-[#f0f0f0]">
        <Chevron d={UP} />
        <div className="flex w-full flex-1 flex-col items-center">
          <div className="h-[108px] w-[12px] bg-[#cdcdcd]" />
        </div>
        <Chevron d={DOWN} />
      </div>
    </div>
  );
}

function Mark({ box, digit, n }: { box: string; digit: string; n: number }) {
  return (
    <>
      <div className={`pointer-events-none absolute border-2 border-[#f11] ${box}`} />
      <span className={`pointer-events-none absolute font-['Noto_Sans',sans-serif] text-[15px] leading-[16px] text-[#f11] ${digit}`}>{n}</span>
    </>
  );
}

function Side() {
  const tab = "h-[15px] border-r border-[#666] leading-[15px]";
  return (
    <aside className={`relative flex w-[249px] shrink-0 flex-col border-l border-white text-[10px] ${PANEL}`}>
      <div className="mr-[3px] flex flex-1 flex-col border-r border-b border-[#b4b4b4] pl-[2px]">
        <div className="mt-[3px] flex h-[9px] items-center">
          <div className="h-[4px] flex-1 border-y border-[#aaa]" />
          <button type="button" aria-label="Close panel" className="mx-[5px] flex items-center">
            <svg width="6" height="6" viewBox="0 0 6 6" stroke="#111" strokeWidth="1.500">
              <path d="m.5.5 5 5M5.500.5l-5 5" />
            </svg>
          </button>
        </div>
        <div role="tablist" className="mt-[3px] mr-[3px] flex h-[16px] items-end border-b border-[#fafafa]">
          <button type="button" role="tab" className={`${tab} w-[36px]`}>Work</button>
          <button type="button" role="tab" className={`${tab} w-[39px] pl-px`}>Output</button>
          <button type="button" role="tab" className="h-[15px] w-[33px] pl-[4px] text-left leading-[15px]">Doc</button>
          <button type="button" role="tab" aria-selected="true" className="h-[16px] w-[38px] border-r border-[#666] pr-[5px] text-center leading-[14px]">User</button>
          <button type="button" role="tab" className={`${tab} w-[33px] pl-[3px] text-left`}>Test</button>
        </div>
        <div className="flex h-[21px] items-center pl-[4px] text-[9px]">
          {[
            { name: "Processing", w: "w-[48px]", gap: "mr-[6px]" },
            { name: "Auxiliary", w: "w-[48px]", gap: "mr-[7px]" },
            { name: "Other", w: "w-[40px]", gap: "" },
          ].map((r) => (
            <label key={r.name} className={`flex shrink-0 items-center whitespace-nowrap ${r.gap}`}>
              <input
                type="radio"
                name="section"
                defaultChecked={r.name === "Other"}
                className="h-[9px] w-[9px] shrink-0 appearance-none rounded-full border border-t-[#777] border-l-[#777] border-r-[#ddd] border-b-[#ddd] bg-white checked:bg-[radial-gradient(#000_0_2px,#fff_3px)]"
              />
              <span className={`${r.w} pl-[4px]`}>{r.name}</span>
            </label>
          ))}
        </div>
        <div className="mr-[11px] ml-[3px]">
          <PropertyTable />
          <div className="mt-[4px] h-[15px] border border-[#888]" />
          <div className="mt-[2px] flex justify-between">
            <Push width="w-[53px]">Open</Push>
            <Push width="w-[53px]" muted>Save</Push>
            <Push width="w-[56px]">Read</Push>
            <Push width="w-[50px]" muted>Write</Push>
          </div>
        </div>
        <div className="mt-[8px] mr-[3px] h-px bg-[#666]" />
      </div>
      <ul role="listbox" aria-label="Return position choices" className="absolute top-[169px] left-[148px] w-[71px] border border-[#777] bg-white font-['Liberation_Sans',sans-serif] text-[9px] leading-[11px] whitespace-nowrap">
        {choices.map((c) => (
          <li key={c} role="option" aria-selected={c === "Docking point"} className="h-[11px] pl-px aria-selected:bg-[#0078d7] aria-selected:text-white">
            {c}
          </li>
        ))}
      </ul>
      <Mark n={1} box="top-[8px] left-[108px] h-[20px] w-[38px] rounded-[4px]" digit="-top-[9px] left-[122px]" />
      <Mark n={2} box="top-[29px] left-[130px] h-[20px] w-[50px] rounded-[4px]" digit="top-[31px] left-[196px]" />
      <Mark n={3} box="top-[343px] left-[119px] h-[23px] w-[60px] rounded-[4px]" digit="top-[370px] left-[145px]" />
      <Mark n={4} box="top-[152px] left-[138px] h-[68px] w-[87px] rounded-[10px]" digit="top-[178px] left-[228px]" />
      <Mark n={5} box="top-[343px] left-[183px] h-[23px] w-[48px] rounded-[4px]" digit="top-[368px] left-[202px]" />
    </aside>
  );
}

const swatches = [
  "bg-black", "bg-[#0000ff]", "bg-[#ff0000]", "bg-[#00ff00]", "bg-[#fa8072]", "bg-[#ffff00]", "bg-[#1e90ff]",
  "bg-[#8b3510]", "bg-[#808000]", "bg-[#00805c]", "bg-[#ff4500]", "bg-[#400080]", "bg-[#ffd1dc]", "bg-[#b19cf9]",
  "bg-[#d5ff98]", "bg-[#ff9058]", "bg-[#da7394]", "bg-[#8870db]", "bg-[#77dd77]", "bg-[#b19c70]",
];

function Palette() {
  return (
    <div className="flex h-[27px] items-center border-b border-[#bdbdbd] pt-px">
      <div className="flex w-[17px] flex-col items-center gap-[5px] pr-[5px]">
        <svg width="6" height="6" viewBox="0 0 6 6" stroke="#111" strokeWidth="1.500">
          <path d="m.5.5 5 5M5.500.5l-5 5" />
        </svg>
        <svg width="6" height="7" viewBox="0 0 6 7" stroke="#aaa" fill="none">
          <path d="M1.500 0v6M4.500 0v6M0 6.500h5" />
        </svg>
      </div>
      <div className="grid w-[422px] grid-cols-20 gap-x-[2px]">
        {swatches.map((c, i) => (
          <button
            key={c}
            type="button"
            aria-label={`Layer colour ${i + 1}`}
            className={`h-[21px] border ${i === 1 ? "border-t-2 border-l-2 border-t-black border-l-black border-r-[#f0f0f0] border-b-[#f0f0f0]" : "border-[#a0a0a0]"} ${c}`}
          />
        ))}
      </div>
    </div>
  );
}

function StatusBar() {
  const cell = "h-[15px] border border-[#999] px-px leading-[13px]";
  return (
    <footer className="mt-[3px] flex gap-[2px] overflow-hidden text-[10px] whitespace-nowrap">
      <div className={`${cell} flex-1`}>--- *Welcome to use the Laser system of cutting,Propose the display area 1024*768 or higher *---</div>
      <div className={`${cell} w-[17px]`} />
      <div className={`${cell} w-[116px] overflow-hidden border-r-0 pl-[4px]`}>General mode,Total count</div>
    </footer>
  );
}

const menus = ["File(F)", "Edit(E)", "Draw(D)", "Config(S)", "Handle(W)", "Tool(T)", "Model(M)", "View(V)", "Help(H)"];

export default function App() {
  return (
    <div className={`bg-white pr-[13px] pl-[11px] text-[#111] ${UI}`}>
      <header className="flex h-[44px] flex-col pt-[9px]">
        <div className="flex h-[17px] items-center pl-px">
          <svg width="14" height="14" viewBox="0 0 14 14" fill="#e01010">
            <path d="M7 0 10 3.500 9 5h3l2 2-2 2H9l1 1.500L7 14l-3-3.500L5 9H2L0 7l2-2h3L4 3.500z" />
            <path d="M7 3v8M2 7h10" stroke="#fff" strokeWidth=".5" />
          </svg>
          <h1 className="ml-[4px] text-[10px] leading-[17px]">RDWorksV8.01.49-20200819-[Unnamed-C:\escritorio\vectores\df.ai]</h1>
        </div>
        <nav className="flex h-[18px] items-center gap-[12px] pl-[5px] text-[10px]">
          {menus.map((m) => (
            <button key={m} type="button">
              {m}
            </button>
          ))}
        </nav>
      </header>
      <div className="bg-[#f0f0f0]">
        <div className="flex flex-col">
          <ToolbarMain />
          <ToolbarSecond />
          <ToolbarCoords />
          <ToolbarAlign />
          <ToolbarCut />
        </div>
        <main className="flex">
          <ToolBox />
          <Workspace />
          <Side />
        </main>
        <Palette />
        <StatusBar />
      </div>
    </div>
  );
}
